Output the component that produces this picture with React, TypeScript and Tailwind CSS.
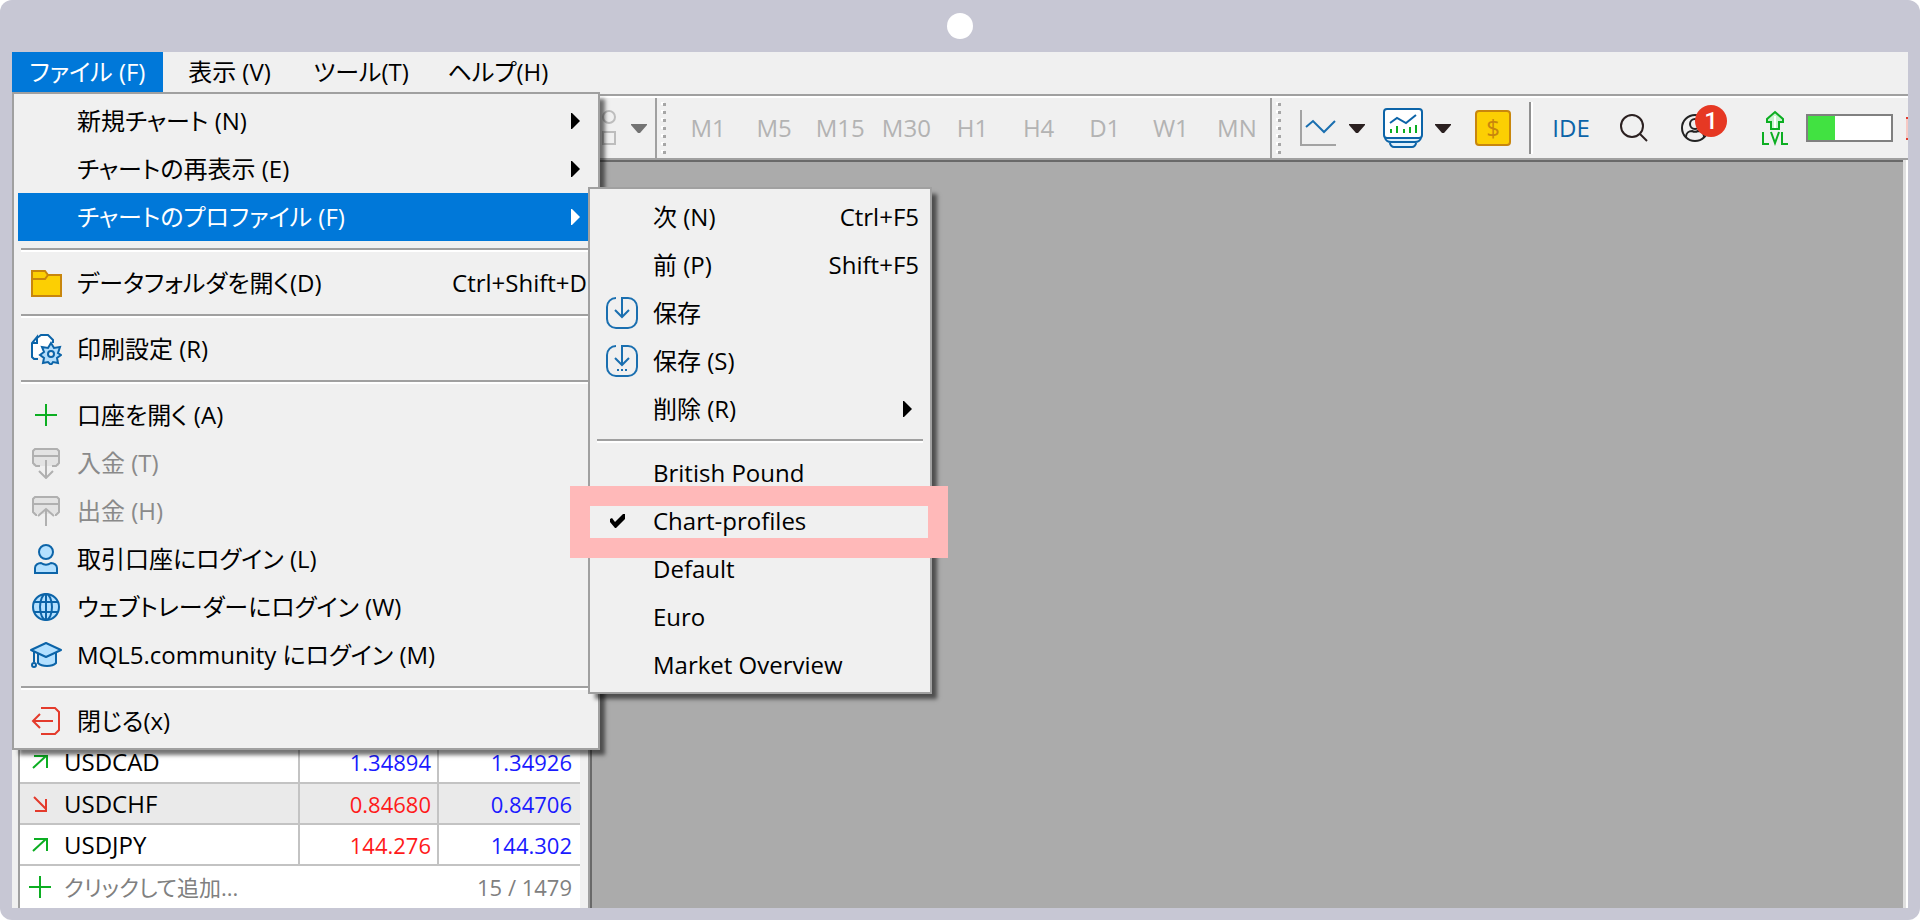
import type { ReactNode } from "react";
import clsx from "clsx";

type Entry = {
  label?: string;
  keys?: string;
  icon?: ReactNode;
  arrow?: boolean;
  disabled?: boolean;
  active?: boolean;
  sub?: Entry[];
};

function Svg({ children }: { children: ReactNode }) {
  return (
    <svg viewBox="0 0 32 32" fill="none" strokeWidth="2" className="h-8 w-8" aria-hidden="true">
      {children}
    </svg>
  );
}

const FolderIcon = () => (
  <Svg>
    <path d="M2 4h13l3 4h13v21H2z" fill="#fccf03" stroke="#c8860d" />
    <path d="M2 12h13l3-4" stroke="#c8860d" />
  </Svg>
);

const PrintIcon = () => (
  <Svg>
    <path d="M9 2h9l5 5v17H2V11z" fill="#fff" />
    <path d="M8 26H4l-2-2V10l5-6v6H2M7 5l4-3h7l5 5v3" stroke="#0c64a8" />
    <path
      d="m21 10 3 5 6-1-2 6 3 2-4 3 1 5-5-1-2 3-3-3-5 1 1-5-4-3 4-3-2-5 6 1z"
      fill="#b3ddfb"
      stroke="#0c64a8"
    />
    <circle cx="21" cy="21" r="3" fill="#efefef" stroke="#0c64a8" />
  </Svg>
);

const PlusIcon = () => (
  <Svg>
    <path d="M16 5v22M5 16h22" stroke="#0cae22" />
  </Svg>
);

const DepositIcon = () => (
  <Svg>
    <path d="M3 2h26v17H3z" fill="#e3e3e3" />
    <path d="M10 19H6l-3-3V4l2-2h22l2 2v12l-3 3h-4M3 9h26M16 13v17M9 24l7 7 7-7" stroke="#b0b0b0" />
  </Svg>
);

const WithdrawIcon = () => (
  <Svg>
    <path d="M3 2h26v17H3z" fill="#e3e3e3" />
    <path d="M7 20H6l-3-3V4l2-2h22l2 2v13l-3 3h-1M3 9h26M16 14v17M8 21l8-7 8 7" stroke="#b0b0b0" />
  </Svg>
);

const UserIcon = () => (
  <Svg>
    <circle cx="16" cy="9" r="7" fill="#b3e0ff" stroke="#0c64a8" />
    <path d="M5 30v-5c0-3 3-5 6-5 3 2 7 2 10 0 3 0 6 2 6 5v5z" fill="#b3e0ff" stroke="#0c64a8" />
  </Svg>
);

const GlobeIcon = () => (
  <Svg>
    <circle cx="16" cy="16" r="13" fill="#b3e0ff" stroke="#0c64a8" />
    <ellipse cx="16" cy="16" rx="6" ry="13" stroke="#0c64a8" />
    <path d="M16 3v26M4 11h24M4 21h24" stroke="#0c64a8" />
  </Svg>
);

const CapIcon = () => (
  <Svg>
    <path d="M8 12v12c4 4 14 4 18 0V12z" fill="#b3e0ff" stroke="#0c64a8" />
    <path d="M1 11 16 4l15 7-15 7z" fill="#b3e0ff" stroke="#0c64a8" strokeLinejoin="round" />
    <path d="M4 12v11" stroke="#0c64a8" />
    <circle cx="4" cy="26" r="2" stroke="#0c64a8" />
  </Svg>
);

const ExitIcon = () => (
  <Svg>
    <path d="M11 3h14l4 4v18l-4 4H11M23 16H4M10 9l-7 7 7 7" stroke="#e43b2c" />
  </Svg>
);

const SaveIcon = ({ dots }: { dots?: boolean }) => (
  <Svg>
    <path
      d="M10 1C5 1 1 5 1 10v12c0 5 4 9 9 9h12c5 0 9-4 9-9V10c0-5-4-9-9-9h-6v19M9 13l7 7 7-7"
      stroke="#1a6fb0"
    />
    {dots && <path d="M11 25h2M15 25h2M19 25h2" stroke="#1a6fb0" />}
  </Svg>
);

const CheckIcon = () => (
  <svg viewBox="0 0 24 16" className="h-4 w-6" aria-hidden="true">
    <path d="m0 6 2-1 3 4 8-8h2v5l-9 9H5L0 9z" fill="#000" />
  </svg>
);

const profileItems: Entry[] = [
  { label: "次 (N)", keys: "Ctrl+F5" },
  { label: "前 (P)", keys: "Shift+F5" },
  { label: "保存", icon: <SaveIcon /> },
  { label: "保存 (S)", icon: <SaveIcon dots /> },
  { label: "削除 (R)", arrow: true },
  {},
  { label: "British Pound" },
  { label: "Chart-profiles", icon: <CheckIcon /> },
  { label: "Default" },
  { label: "Euro" },
  { label: "Market Overview" },
];

const fileItems: Entry[] = [
  { label: "新規チャート (N)", arrow: true },
  { label: "チャートの再表示 (E)", arrow: true },
  { label: "チャートのプロファイル (F)", arrow: true, active: true, sub: profileItems },
  {},
  { label: "データフォルダを開く(D)", keys: "Ctrl+Shift+D", icon: <FolderIcon /> },
  {},
  { label: "印刷設定 (R)", icon: <PrintIcon /> },
  {},
  { label: "口座を開く (A)", icon: <PlusIcon /> },
  { label: "入金 (T)", disabled: true, icon: <DepositIcon /> },
  { label: "出金 (H)", disabled: true, icon: <WithdrawIcon /> },
  { label: "取引口座にログイン (L)", icon: <UserIcon /> },
  { label: "ウェブトレーダーにログイン (W)", icon: <GlobeIcon /> },
  { label: "MQL5.community にログイン (M)", icon: <CapIcon /> },
  {},
  { label: "閉じる(x)", icon: <ExitIcon /> },
];

const timeframes = ["M1", "M5", "M15", "M30", "H1", "H4", "D1", "W1", "MN"];

const quotes = [
  { symbol: "USDCAD", up: true, bid: "1.34894", bidUp: true, ask: "1.34926" },
  { symbol: "USDCHF", up: false, bid: "0.84680", bidUp: false, ask: "0.84706" },
  { symbol: "USDJPY", up: true, bid: "144.276", bidUp: false, ask: "144.302" },
];

function Menu({ items, nested }: { items: Entry[]; nested?: boolean }) {
  return (
    <ul
      className={clsx(
        "absolute z-10 border-2 border-[#a0a0a0] bg-[#f0f0f0] px-1 text-black shadow-[6px_6px_4px_-1px_rgba(0,0,0,0.55)]",
        nested ? "-top-[6px] left-[570px] w-[344px] pt-1 pb-[3px]" : "top-10 left-0 w-[588px] py-[3px]"
      )}
    >
      {items.map((it, i) =>
        !it.label ? (
          <li key={i} className={clsx("flex items-center px-[3px]", nested ? "h-4" : "h-[18px]")} role="separator">
            <div className="h-1 w-full border-t-2 border-[#a0a0a0] bg-white" />
          </li>
        ) : (
          <li key={i} className="relative">
            <button
              disabled={it.disabled}
              className={clsx(
                "flex h-12 w-full items-center text-left whitespace-nowrap",
                it.active && "bg-[#0078d9] text-white",
                it.disabled && "text-[#8a8a8a]"
              )}
            >
              <span className="ml-3 flex w-8 shrink-0 justify-center">{it.icon}</span>
              <span className="ml-[15px]">{it.label}</span>
              {it.keys && <span className="ml-auto mr-[7px]">{it.keys}</span>}
              {it.arrow && (
                <svg viewBox="0 0 10 16" className="mr-[13px] ml-auto h-4 w-[10px] fill-current" aria-hidden="true">
                  <path d="M0 0h1l8 8-8 8H0z" />
                </svg>
              )}
            </button>
            {it.sub && <Menu items={it.sub} nested />}
          </li>
        )
      )}
      {nested && (
        <li
          className="pointer-events-none absolute top-[297px] -right-[18px] -left-5 h-[72px] border-20 border-[#ffb9b9]"
          aria-hidden="true"
        />
      )}
    </ul>
  );
}

function Caret() {
  return (
    <svg viewBox="0 0 16 9" className="h-[9px] w-4 shrink-0 fill-current" aria-hidden="true">
      <path d="M0 0h16v1L9 9H7L0 1z" />
    </svg>
  );
}

function Grip() {
  return (
    <svg className="mt-1 h-[56px] w-[6px] shrink-0 self-start" viewBox="0 0 6 56" aria-hidden="true">
      {[0, 1, 2, 3, 4, 5, 6].map(n => (
        <g key={n}>
          <rect x="0" y={n * 8} width="3" height="3" fill="#fff" />
          <rect x="2" y={n * 8 + 1} width="3" height="3" fill="#a6a6a6" />
        </g>
      ))}
    </svg>
  );
}

function Toolbar() {
  return (
    <div className="flex h-[66px] shrink-0 overflow-hidden border-y-2 border-[#a0a0a0]">
      <div className="flex w-full border-t-2 border-white">
        <div className="flex w-[645px] shrink-0 items-center justify-end border-r-2 border-[#a0a0a0]">
          <button className="flex items-center gap-3 pr-2 text-[#737373]" aria-label="図形">
            <svg viewBox="0 0 20 36" className="h-9 w-5" fill="none" stroke="#bdbdbd" strokeWidth="2" aria-hidden="true">
              <circle cx="10" cy="7" r="6" />
              <rect x="4" y="22" width="12" height="12" />
            </svg>
            <Caret />
          </button>
        </div>
        <div className="flex w-[615px] shrink-0 items-center border-r-2 border-[#a0a0a0] pl-1">
          <Grip />
          <div className="ml-2 grid flex-1 grid-cols-9">
            {timeframes.map(t => (
              <button key={t} disabled className="text-center text-[#b3b3b3]">
                {t}
              </button>
            ))}
          </div>
        </div>
        <div className="flex flex-1 items-center pl-1">
          <Grip />
          <button className="ml-[18px] flex items-center gap-[13px] text-[#2b2020]" aria-label="チャート種類">
            <svg viewBox="0 0 36 36" className="h-9 w-9" fill="none" strokeWidth="2" aria-hidden="true">
              <path d="M1 0v35h35" stroke="#a3a3a3" />
              <path d="m6 17 7-6 11 11 11-11" stroke="#1a6fb0" />
            </svg>
            <Caret />
          </button>
          <button className="ml-[18px] flex items-center gap-3 text-[#2b2020]" aria-label="インディケータ">
            <svg viewBox="0 0 40 40" className="h-10 w-10" fill="none" stroke="#0c64a8" strokeWidth="2" aria-hidden="true">
              <path d="m3 30 5 9h24l5-9z" fill="#e0f0fb" stroke="none" />
              <path d="M2 30c1 3 3 4 6 4h24c3 0 5-1 6-4M7 35c0 2 2 4 4 4h18c2 0 4-2 4-4" />
              <rect x="1" y="1" width="38" height="29" rx="3" fill="#fff" />
              <path d="m7 15 7-5 9 5 10-8" />
              <path d="M8 25v-4M14 25v-7M21 25v-4M27 25v-6M33 25v-8" stroke="#0cae22" />
            </svg>
            <Caret />
          </button>
          <button className="ml-6 h-9 w-9 rounded border-2 border-[#c8860d] bg-[#fccf03] text-2xl leading-8 text-[#c8860d]">
            $
          </button>
          <div className="ml-[18px] h-[52px] w-1 border-x-2 border-l-[#909090] border-r-white" />
          <button className="ml-[18px] w-10 text-[#0c64a8]">IDE</button>
          <button className="ml-7" aria-label="検索">
            <svg viewBox="0 0 30 30" className="h-[30px] w-[30px]" fill="none" stroke="#2b2020" strokeWidth="2" aria-hidden="true">
              <circle cx="13" cy="13" r="11" />
              <path d="m21 21 7 7" />
            </svg>
          </button>
          <button className="relative ml-[31px] h-[30px] w-[30px]" aria-label="アカウント">
            <svg viewBox="0 0 30 30" className="h-[30px] w-[30px]" fill="none" stroke="#222" strokeWidth="2" aria-hidden="true">
              <circle cx="15" cy="15" r="13" />
              <circle cx="15" cy="11" r="5" />
              <path d="M6 24c0-4 3-6 6-6 2 1 4 1 6 0 3 0 6 2 6 6" />
            </svg>
            <span className="absolute -top-2 left-[15px] flex h-8 w-8 items-center justify-center rounded-full bg-[#e63823] font-['Roboto',sans-serif] font-medium text-white">
              1
            </span>
          </button>
          <div className="ml-[51px] flex w-7 shrink-0 flex-col items-center">
            <svg viewBox="0 0 28 36" className="h-9 w-7" fill="none" stroke="#0cae22" strokeWidth="2" aria-hidden="true">
              <path d="m14 2 8 7v3h-4v7h-8v-7H6V9z" fill="#c9f2cf" />
              <path d="M14 6v12" stroke="#fff" />
              <path d="M2 22v12h6M10 22l4 11 4-11M21 22v12h6" />
            </svg>
          </div>
          <div className="ml-[17px] h-7 w-[87px] shrink-0 border-2 border-[#808080] bg-white">
            <div className="h-full w-[27px] bg-[#41e241]" />
          </div>
          <div className="ml-auto h-[23px] w-[2px] border-y-2 border-[#e43b2c] bg-[#f7c9c4]" />
        </div>
      </div>
    </div>
  );
}

function MarketWatch() {
  return (
    <div className="flex w-[580px] shrink-0 flex-col justify-end border-r-2 border-[#696969] bg-[#f0f0f0] pl-[6px]">
      <div className="flex flex-1 flex-col justify-end border-r-2 border-[#a0a0a0] pr-2">
        <div className="flex flex-1 flex-col justify-end border-l-2 border-[#a0a0a0] bg-white">
          <table className="w-full border-collapse">
            <tbody>
              {quotes.map(q => (
                <tr key={q.symbol} className="h-[41px] border-b-2 border-[#c3c3c3] even:bg-[#eaeaea]">
                  <td className="border-r-2 border-[#c3c3c3] p-0">
                    <span className="flex items-center gap-4 pl-3">
                      <svg
                        viewBox="0 0 16 16"
                        className={clsx("h-4 w-4", q.up ? "text-[#0cae22]" : "text-[#e43b2c]")}
                        fill="none"
                        stroke="currentColor"
                        strokeWidth="2"
                        aria-hidden="true"
                      >
                        {q.up ? <path d="M1 14 14 2M2 2h13v12" /> : <path d="m2 1 12 12M14 3v12H3" />}
                      </svg>
                      {q.symbol}
                    </span>
                  </td>
                  <td
                    className={clsx(
                      "w-[139px] border-r-2 border-[#c3c3c3] py-0 pr-[6px] text-right text-[22px]",
                      q.bidUp ? "text-[#1a1aff]" : "text-[#ff1a1a]"
                    )}
                  >
                    {q.bid}
                  </td>
                  <td className="w-[142px] py-0 pr-2 text-right text-[22px] text-[#1a1aff]">{q.ask}</td>
                </tr>
              ))}
            </tbody>
          </table>
          <button className="flex h-[42px] items-center pr-2 pl-2 text-[22px] text-[#808080]">
            <svg viewBox="0 0 24 24" className="h-6 w-6" stroke="#0cae22" strokeWidth="2" aria-hidden="true">
              <path d="M12 1v22M1 12h22" />
            </svg>
            <span className="ml-3">クリックして追加...</span>
            <span className="ml-auto">15 / 1479</span>
          </button>
        </div>
      </div>
    </div>
  );
}

export default function App() {
  return (
    <div className="bg-white">
      <div className="flex min-h-screen flex-col rounded-[12px] bg-[#c7c7d4] px-3 pb-3 font-['Open_Sans','Noto_Sans_CJK_JP',sans-serif] text-2xl leading-8 [font-feature-settings:'palt']">
        <div className="flex h-[52px] shrink-0 items-center justify-center">
          <div className="h-[26px] w-[26px] rounded-full bg-white" />
        </div>
        <div className="flex flex-1 flex-col bg-[#f0f0f0]">
          <nav className="relative flex h-[42px] shrink-0">
            <button className="h-10 w-[151px] bg-[#0078d9] text-white">ファイル (F)</button>
            <button className="ml-[14px] h-10 w-[105px]">表示 (V)</button>
            <button className="ml-6 h-10 w-[110px]">ツール(T)</button>
            <button className="ml-[22px] h-10 w-[120px]">ヘルプ(H)</button>
            <Menu items={fileItems} />
          </nav>
          <Toolbar />
          <div className="flex flex-1">
            <MarketWatch />
            <main className="flex-1 border-t-2 border-[#696969] bg-[#ababab]" />
            <div className="w-[5px] border-r-2 border-white bg-[#e0e0e0]" />
          </div>
        </div>
      </div>
    </div>
  );
}
